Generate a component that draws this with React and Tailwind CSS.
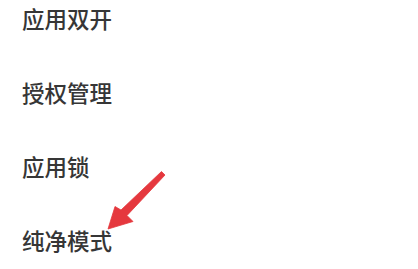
import React from "react";

const items = ["应用双开", "授权管理", "应用锁", "纯净模式"];

export default function App() {
  return (
    <div className="relative w-[418px] h-[269px] overflow-hidden bg-white">
      <div
        className="flex flex-col gap-[46px] pt-[4px] pl-[22px] text-[22.5px] leading-[28px] font-medium text-[#363636]"
        style={{ fontFamily: '"Noto Sans CJK SC", "Noto Sans", sans-serif' }}
      >
        {items.map((t) => (
          <div key={t}>{t}</div>
        ))}
      </div>

      {/* red arrow pointing at 纯净模式 */}
      <svg
        className="absolute left-0 top-0"
        width="418"
        height="269"
        viewBox="0 0 418 269"
      >
        <polygon
          points="161.5,171.5 165,175 127,215.5 133,221.5 108,229 115,206.5 121,210"
          fill="#e5383e"
          stroke="#e5383e"
          strokeWidth="0.8"
          strokeLinejoin="round"
        />
      </svg>
    </div>
  );
}
